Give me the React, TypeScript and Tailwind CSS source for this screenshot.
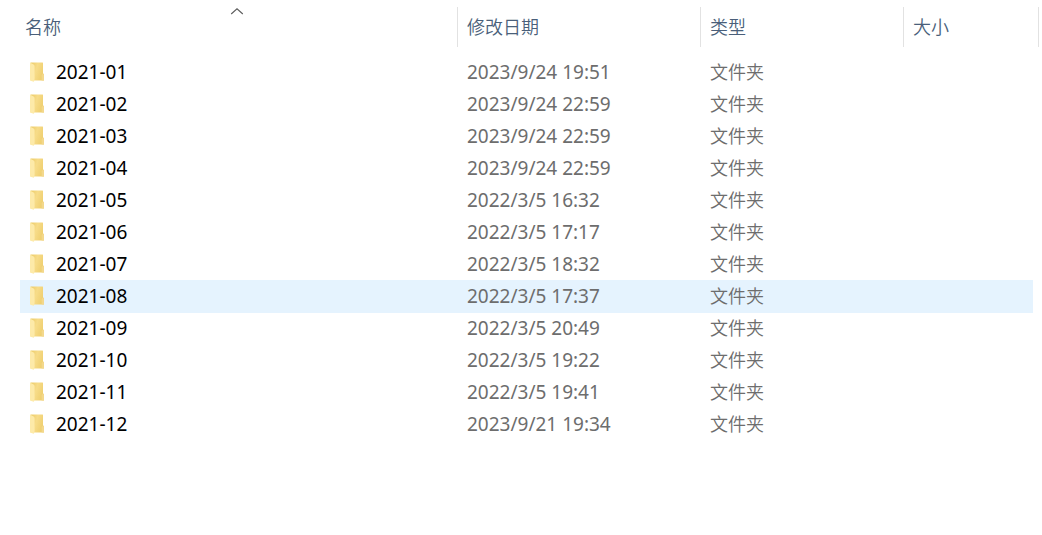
import React from "react";

type Folder = { name: string; modified: string };

const folders: Folder[] = [
  { name: "2021-01", modified: "2023/9/24 19:51" },
  { name: "2021-02", modified: "2023/9/24 22:59" },
  { name: "2021-03", modified: "2023/9/24 22:59" },
  { name: "2021-04", modified: "2023/9/24 22:59" },
  { name: "2021-05", modified: "2022/3/5 16:32" },
  { name: "2021-06", modified: "2022/3/5 17:17" },
  { name: "2021-07", modified: "2022/3/5 18:32" },
  { name: "2021-08", modified: "2022/3/5 17:37" },
  { name: "2021-09", modified: "2022/3/5 20:49" },
  { name: "2021-10", modified: "2022/3/5 19:22" },
  { name: "2021-11", modified: "2022/3/5 19:41" },
  { name: "2021-12", modified: "2023/9/21 19:34" },
];

const highlighted = "2021-08";

function FolderIcon() {
  return (
    <svg className="h-5 w-4 shrink-0" viewBox="0 0 16 20" aria-hidden="true">
      <defs>
        <linearGradient id="folder-back" x1="0" y1="0" x2="1" y2="0.4">
          <stop offset="0" stopColor="#ebca66" />
          <stop offset="0.5" stopColor="#f7dc89" />
          <stop offset="1" stopColor="#efcf70" />
        </linearGradient>
      </defs>
      <path d="M1.6 0.4H13.6Q14 0.4 14 0.9V11.2L15 12.4V18.6H5L2 16Z" fill="url(#folder-back)" />
      <path d="M1 0.6L4.6 2.4Q5.6 3 5.6 4.4V16.4Q5.6 17.6 4.9 19.8L1.4 18.8Q1 18.7 1 18Z" fill="#fdeaa9" />
      <path d="M14 11.5L12.6 13V18.6H15V12.4Z" fill="#f3d88c" />
    </svg>
  );
}

function HeaderCell({ label, sorted = false }: { label: string; sorted?: boolean }) {
  return (
    <th scope="col" aria-sort={sorted ? "ascending" : undefined} className="p-0 pt-[7px] pb-[9px] font-[350]">
      <button
        type="button"
        className={`relative flex h-10 w-full items-center border-r border-[#e2e2e2] text-left text-[18px] leading-6 text-[#4a5f7a] ${sorted ? "pl-[5px]" : "pl-[9px]"}`}
      >
        {label}
        {sorted && (
          <svg className="absolute top-0 left-1/2 h-2 w-4 -translate-x-[10px]" viewBox="0 0 16 8" fill="none" aria-hidden="true">
            <path d="M2.2 7L8 1.8L13.8 7" stroke="#5c5c5c" strokeWidth="1.1" />
          </svg>
        )}
      </button>
    </th>
  );
}

export default function App() {
  return (
    <main className="min-h-screen bg-white pr-[3px] pl-5 font-['Noto_Sans','Noto_Sans_CJK_SC',sans-serif]">
      <table className="w-full table-fixed border-collapse text-left">
        <colgroup>
          <col className="w-[43%]" />
          <col className="w-[243px]" />
          <col className="w-[203px]" />
          <col className="w-[135px]" />
        </colgroup>
        <thead>
          <tr>
            <HeaderCell label="名称" sorted />
            <HeaderCell label="修改日期" />
            <HeaderCell label="类型" />
            <HeaderCell label="大小" />
          </tr>
        </thead>
        <tbody className="text-[19px] leading-8 text-[#6d6d6d]">
          {folders.map(({ name, modified }) => {
            const tint = name === highlighted ? "bg-[#e5f3fe] shadow-[0_1px_0_#e5f3fe]" : "";
            return (
              <tr key={name}>
                <td className={`p-0 ${tint}`}>
                  <a href={`#${name}`} className="flex h-8 items-center gap-[11px] pl-[9px] text-black">
                    <FolderIcon />
                    {name}
                  </a>
                </td>
                <td className={`p-0 pl-[9px] ${tint}`}>{modified}</td>
                <td className={`p-0 pl-[9px] text-[18px] font-[350] ${tint}`}>文件夹</td>
                <td className="p-0 pr-[6px]">
                  <div className={`h-8 ${tint}`} />
                </td>
              </tr>
            );
          })}
        </tbody>
      </table>
    </main>
  );
}
